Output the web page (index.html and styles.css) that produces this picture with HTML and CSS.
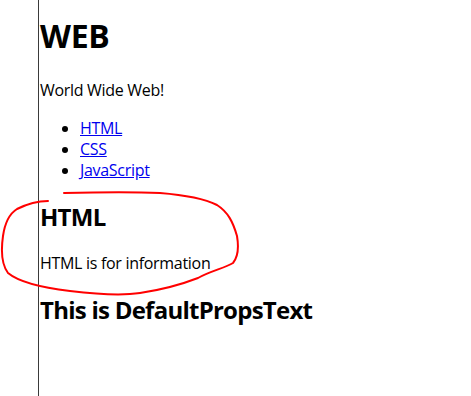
FILE: index.html
```html
<!DOCTYPE html>
<html lang="en">
<head>
    <meta charset="UTF-8">
    <meta name="viewport" content="width=device-width, initial-scale=1.0">
    <title>WEB</title>
    <link rel="stylesheet" href="styles.css">
</head>
<body>
    <div class="page">
        <h1>WEB</h1>
        <p class="intro">World Wide Web!</p>
        <ul class="links">
            <li><a href="#">HTML</a></li>
            <li><a href="#">CSS</a></li>
            <li><a href="#">JavaScript</a></li>
        </ul>
        <section class="topic">
            <h2>HTML</h2>
            <p>HTML is for information</p>
        </section>
        <h2 class="default-text">This is DefaultPropsText</h2>
    </div>

    <!-- red pen mark over the HTML block -->
    <svg class="scribble" width="471" height="396" viewBox="0 0 471 396">
        <path d="M64 193 C100 192 140 192 160 193 C185 195 205 199 217 205 C228 212 233 222 237 236 C239 248 238 257 233 263 C225 268 210 271 198 278 C180 285 160 290 140 293 C120 296 95 294 70 291 C45 288 20 283 8 273 C2 265 1 250 3 236 C5 222 9 214 17 209 C27 204 38 201 48 201" />
    </svg>
</body>
</html>
```

FILE: styles.css
```css
body {
    margin: 0;
    font-family: 'Open Sans', 'Noto Sans', sans-serif;
    color: #000;
    background: #fff;
}
.page {
    margin-left: 38px;
    padding-left: 1px;
    border-left: 1px solid #3a3a3a;
    min-height: 100vh;
    box-sizing: border-box;
    overflow: hidden;
}
h1 {
    font-size: 32px;
    line-height: 42px;
    margin: 15px 0 23px;
    font-weight: bold;
    letter-spacing: -0.3px;
}
h2 {
    font-size: 24px;
    line-height: 32px;
    margin: 0 0 20px;
    font-weight: bold;
    letter-spacing: -0.75px;
}
p {
    font-size: 16px;
    line-height: 21px;
    margin: 0 0 20px;
    letter-spacing: -0.3px;
}
.intro {
    margin-bottom: 17px;
}
.links {
    font-size: 16px;
    line-height: 21px;
    margin: 0 0 20px;
    padding-left: 40px;
    letter-spacing: -0.3px;
}
.links a {
    color: #0000ee;
}
.default-text {
    margin-top: 2px;
}
.scribble {
    position: absolute;
    top: 0;
    left: 0;
    pointer-events: none;
}
.scribble path {
    fill: none;
    stroke: #f00;
    stroke-width: 2;
    stroke-linecap: round;
}
```
